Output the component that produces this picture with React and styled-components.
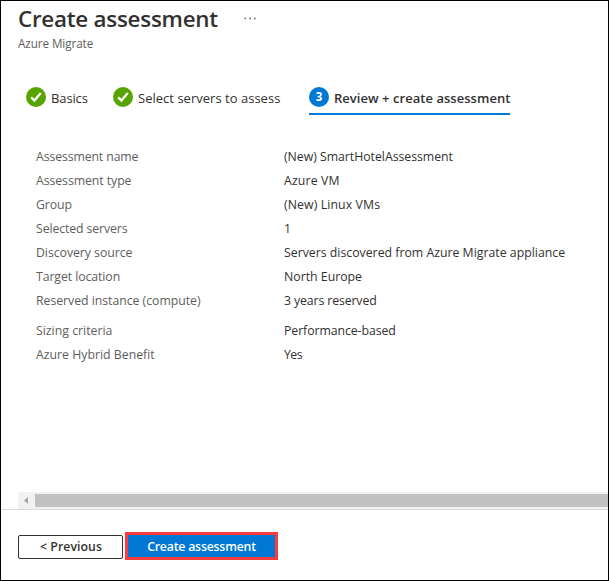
import React from "react";
import styled, { createGlobalStyle } from "styled-components";

const GlobalStyle = createGlobalStyle`
  *, *::before, *::after { box-sizing: border-box; }
  body { margin: 0; background: #fff; }
`;

const Blade = styled.main`
  display: flex;
  flex-direction: column;
  width: 609px;
  height: 581px;
  overflow: hidden;
  border: 1px solid #000;
  background: #fff;
  color: #323130;
  font-family: "Open Sans", "Segoe UI", sans-serif;
  font-size: 12.3px;
  white-space: nowrap;
`;

const Header = styled.header`
  height: 86px;
  padding-left: 17px;
`;

const TitleRow = styled.div`
  display: flex;
  align-items: center;
  gap: 26px;
  height: 34px;
`;

const Title = styled.h1`
  width: 200px;
  margin: 0;
  padding-top: 2px;
  font-size: 22.4px;
  font-weight: 600;
  line-height: 34px;
  letter-spacing: -0.25px;
`;

const MoreIcon = styled.svg`
  width: 12px;
  height: 3px;
  margin-top: 1px;
  fill: #706e6c;
`;

const Subtitle = styled.div`
  color: #605e5c;
  font-size: 11.7px;
  line-height: 16px;
  letter-spacing: -0.08px;
`;

const Tabs = styled.nav`
  display: flex;
  height: 29px;
  padding-left: 25px;
`;

const Tab = styled.div`
  display: flex;
  align-items: flex-start;
  gap: 5px;
  width: ${(p) => p.$width}px;
  height: 28px;
  margin-right: ${(p) => p.$after || 0}px;
  border-bottom: 2px solid ${(p) => (p.$active ? "#0078d4" : "transparent")};
  font-size: 13px;
  font-weight: ${(p) => (p.$active ? 550 : 400)};
  line-height: 22px;
  letter-spacing: ${(p) => p.$spacing || 0}px;
`;

const StatusIcon = styled.svg`
  flex: none;
  width: 20px;
  height: 20px;
`;

const StepNumber = styled.span`
  flex: none;
  width: 20px;
  height: 20px;
  border-radius: 50%;
  background: #0078d4;
  color: #fff;
  font-size: 11.5px;
  font-weight: 700;
  line-height: 20px;
  text-align: center;
`;

const Details = styled.dl`
  flex: 1;
  margin: 0;
  padding: 29px 0 0 35px;
`;

const DetailRow = styled.div`
  display: grid;
  grid-template-columns: 248px 1fr;
  height: 24px;
  margin-top: ${(p) => (p.$separated ? 6 : 0)}px;
  line-height: 24px;
`;

const Label = styled.dt`
  color: #605e5c;
  letter-spacing: ${(p) => p.$spacing}px;
`;

const Value = styled.dd`
  margin: 0;
  letter-spacing: ${(p) => p.$spacing}px;
`;

const Scrollbar = styled.div`
  display: flex;
  align-items: center;
  height: 17px;
  margin-left: 17px;
  background: #f1f1f1;
`;

const ScrollArrow = styled.svg`
  width: 17px;
  height: 17px;
  fill: #a3a3a3;
`;

const ScrollThumb = styled.div`
  flex: 1;
  height: 13px;
  background: #c1c1c1;
`;

const Footer = styled.footer`
  display: flex;
  align-items: flex-start;
  gap: 2px;
  height: 71px;
  padding: 22px 0 0 17px;
  border-top: 1px solid #dcdcdc;
`;

const Button = styled.button`
  width: ${(p) => (p.$primary ? 153 : 105)}px;
  height: ${(p) => (p.$primary ? 28 : 24)}px;
  margin-top: ${(p) => (p.$primary ? 0 : 3)}px;
  padding: ${(p) => (p.$primary ? "1px 0 0" : "0 0 0 1px")};
  border: ${(p) => (p.$primary ? "3px solid #fb3b3c" : "1px solid #323130")};
  border-radius: ${(p) => (p.$primary ? 0 : 2)}px;
  background: ${(p) => (p.$primary ? "#0078d4" : "#fff")};
  color: ${(p) => (p.$primary ? "#fff" : "#323130")};
  font-family: inherit;
  font-size: 12.3px;
  font-weight: ${(p) => (p.$primary ? 600 : 550)};
  line-height: 22px;
  letter-spacing: ${(p) => (p.$primary ? -0.2 : 0.05)}px;
`;

const DETAILS = [
  ["Assessment name", -0.12, "(New) SmartHotelAssessment", -0.03],
  ["Assessment type", -0.07, "Azure VM", 0.14],
  ["Group", -0.08, "(New) Linux VMs", 0.1],
  ["Selected servers", -0.11, "1", 0],
  ["Discovery source", -0.05, "Servers discovered from Azure Migrate appliance", 0],
  ["Target location", -0.09, "North Europe", 0],
  ["Reserved instance (compute)", -0.04, "3 years reserved", -0.12],
  ["Sizing criteria", 0, "Performance-based", -0.08, true],
  ["Azure Hybrid Benefit", 0, "Yes", -0.5],
];

function CheckCircle() {
  return (
    <StatusIcon viewBox="0 0 20 20">
      <circle cx="10" cy="10" r="10" fill="#57a300" />
      <path d="M5.2 10.4 8.4 13.5 14.8 6.1" fill="none" stroke="#fff" strokeWidth="2.3" />
    </StatusIcon>
  );
}

export default function App() {
  return (
    <>
      <GlobalStyle />
      <Blade>
        <Header>
          <TitleRow>
            <Title>Create assessment</Title>
            <MoreIcon viewBox="0 0 12 3">
              <circle cx="1.2" cy="1.5" r="0.9" />
              <circle cx="6" cy="1.5" r="0.9" />
              <circle cx="10.8" cy="1.5" r="0.9" />
            </MoreIcon>
          </TitleRow>
          <Subtitle>Azure Migrate</Subtitle>
        </Header>
        <Tabs>
          <Tab $width={62} $after={25} $spacing={-0.12}>
            <CheckCircle />
            Basics
          </Tab>
          <Tab $width={168} $after={28} $spacing={0.02}>
            <CheckCircle />
            Select servers to assess
          </Tab>
          <Tab $active $width={201} $spacing={0.04}>
            <StepNumber>3</StepNumber>
            Review + create assessment
          </Tab>
        </Tabs>
        <Details>
          {DETAILS.map(([label, labelSpacing, value, valueSpacing, separated]) => (
            <DetailRow key={label} $separated={separated}>
              <Label $spacing={labelSpacing}>{label}</Label>
              <Value $spacing={valueSpacing}>{value}</Value>
            </DetailRow>
          ))}
        </Details>
        <Scrollbar>
          <ScrollArrow viewBox="0 0 17 17">
            <path d="M10 5v7L6 8.5z" />
          </ScrollArrow>
          <ScrollThumb />
        </Scrollbar>
        <Footer>
          <Button>&lt; Previous</Button>
          <Button $primary>Create assessment</Button>
        </Footer>
      </Blade>
    </>
  );
}
